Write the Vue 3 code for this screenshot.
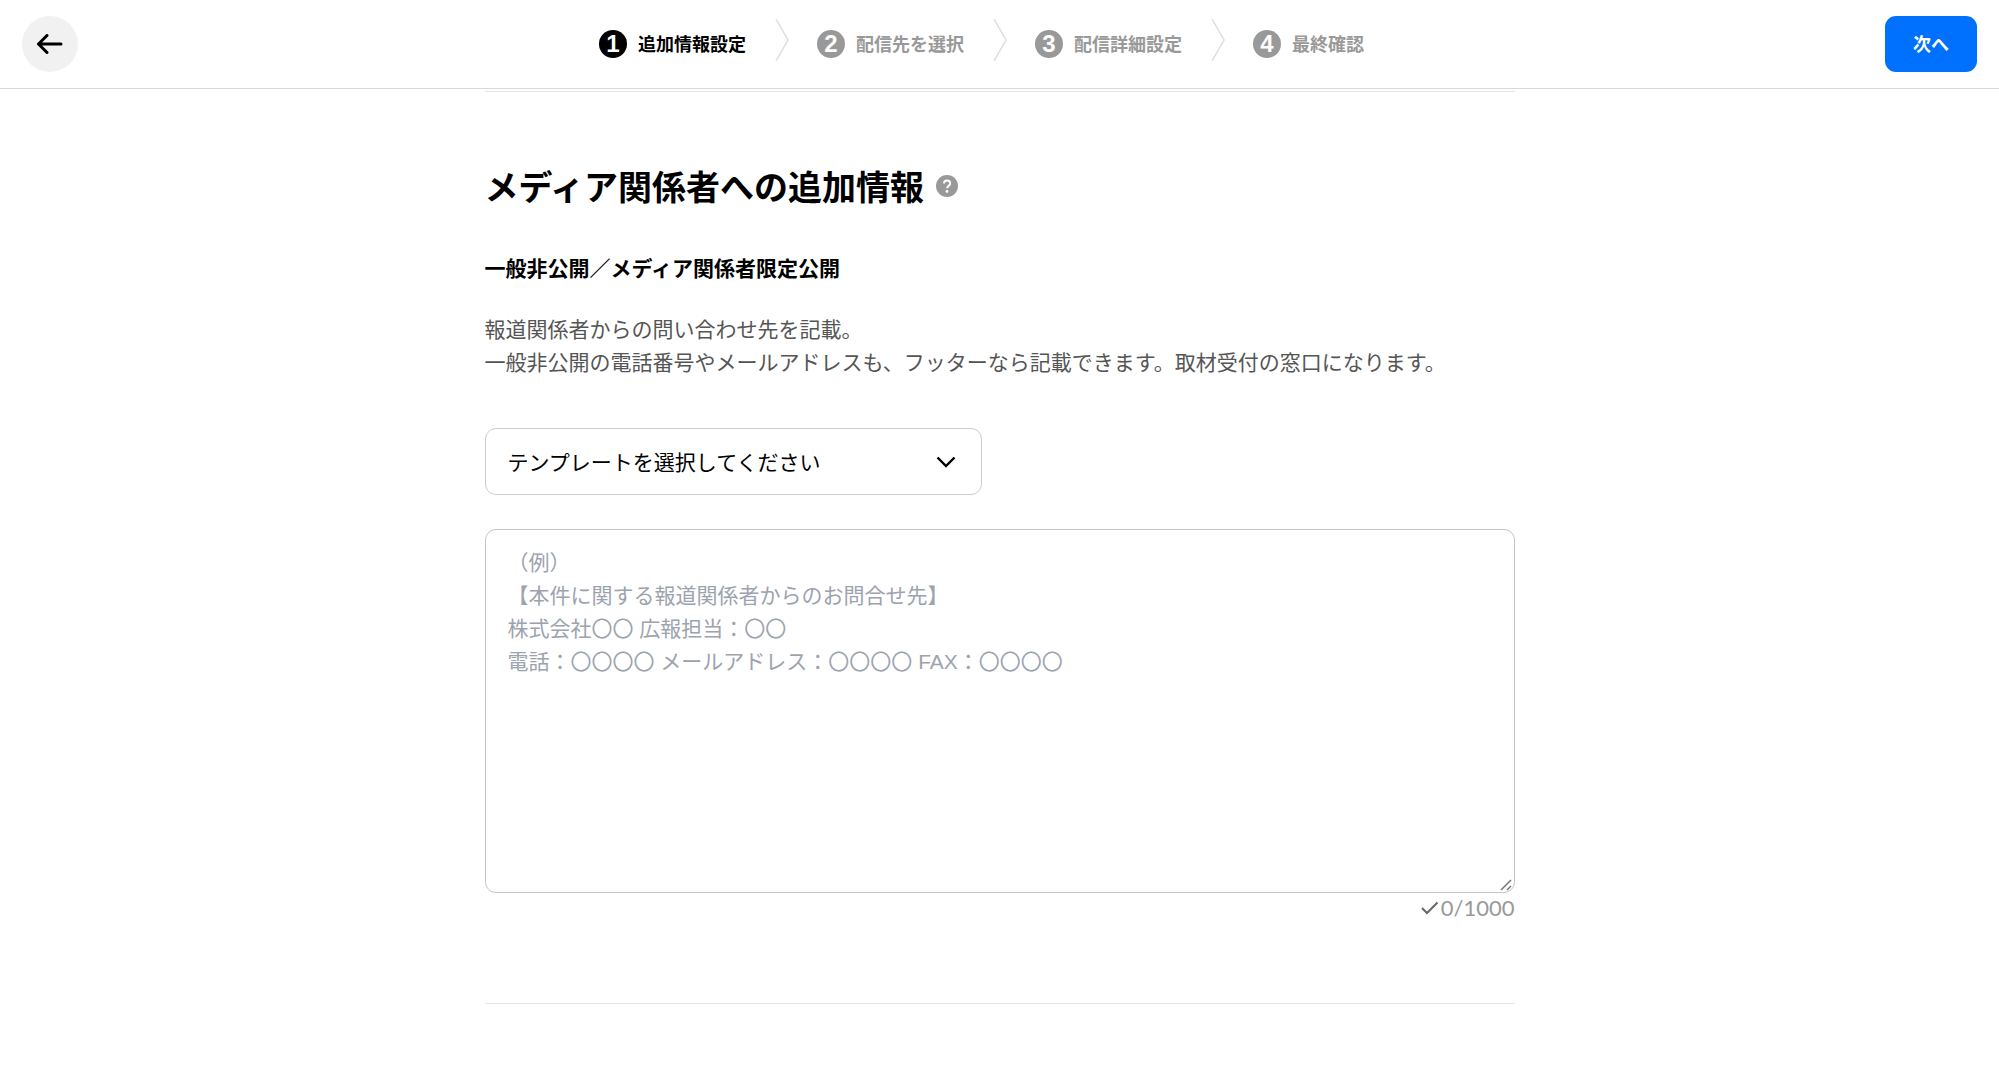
<script setup>
import { computed, ref } from 'vue'

let steps = ref([
  { id: 1, name: '追加情報設定' },
  { id: 2, name: '配信先を選択' },
  { id: 3, name: '配信詳細設定' },
  { id: 4, name: '最終確認' }
])
let currentStep = ref(1)
let template = ref('')
let body = ref('')
const maxLength = 1000

const placeholder = [
  '（例）',
  '【本件に関する報道関係者からのお問合せ先】',
  '株式会社〇〇 広報担当：〇〇',
  '電話：〇〇〇〇 メールアドレス：〇〇〇〇 FAX：〇〇〇〇'
].join('\n')

const count = computed(() => body.value.length)

function goNext() {
  if (currentStep.value < steps.value.length) {
    currentStep.value++
  }
}

function goBack() {
  if (currentStep.value > 1) {
    currentStep.value--
  }
}
</script>

<template>
  <div class="page">
    <header class="header">
      <button @click="goBack" type="button" class="back-btn" aria-label="戻る">
        <svg width="28" height="20" viewBox="0 0 28 20" aria-hidden="true">
          <path d="M11 1.500 2.500 10l8.500 8.500M2.500 10H25" />
        </svg>
      </button>
      <ol class="steps">
        <li
          v-for="(step, index) in steps"
          :key="step.id"
          :class="['step', step.id === currentStep ? 'active' : '']"
        >
          <span class="number">{{ step.id }}</span>
          <span class="name">{{ step.name }}</span>
          <svg
            v-if="index < steps.length - 1"
            class="separator"
            width="14"
            height="44"
            viewBox="0 0 14 44"
            aria-hidden="true"
          >
            <path d="M1 1l12 21L1 43" />
          </svg>
        </li>
      </ol>
      <button @click="goNext" type="button" class="next-btn">次へ</button>
    </header>

    <main class="container">
      <section class="section">
        <div class="title">
          <h1>メディア関係者への追加情報</h1>
          <button type="button" class="help" aria-label="ヘルプ">
            <svg width="22" height="22" viewBox="0 0 22 22" aria-hidden="true">
              <circle cx="11" cy="11" r="11" fill="#999" />
              <path
                d="M8 8.500C8 6.700 9.300 5.400 11 5.400s3.200 1.200 3.200 2.900c0 1.200-.7 1.900-1.600 2.600-.9.700-1.400 1.200-1.400 2.400"
                fill="none"
                stroke="#fff"
                stroke-width="2"
              />
              <circle cx="11" cy="16.400" r="1.400" fill="#fff" />
            </svg>
          </button>
        </div>
        <h2>一般非公開／メディア関係者限定公開</h2>
        <p class="description">
          報道関係者からの問い合わせ先を記載。<br />
          一般非公開の電話番号やメールアドレスも、フッターなら記載できます。取材受付の窓口になります。
        </p>

        <div class="select">
          <select v-model="template" aria-label="テンプレート">
            <option value="">テンプレートを選択してください</option>
          </select>
          <svg width="20" height="12" viewBox="0 0 20 12" aria-hidden="true">
            <path d="M1.500 1.500 10 10l8.500-8.500" />
          </svg>
        </div>

        <textarea
          v-model="body"
          :placeholder="placeholder"
          :maxlength="maxLength"
          aria-label="メディア関係者への追加情報"
        ></textarea>
        <div class="counter">
          <svg width="18" height="14" viewBox="0 0 18 14" aria-hidden="true">
            <path d="M1 7l5 5L16.500 1.500" />
          </svg>
          <span>{{ count }}/{{ maxLength }}</span>
        </div>
      </section>
    </main>
  </div>
</template>

<style>
body {
  background-color: #fff;
}
</style>

<style scoped>
.page {
  font-family: 'Noto Sans CJK JP', sans-serif;
  font-size: 21px;
  line-height: 33px;
  color: #000;
}

button,
select,
textarea {
  font-family: inherit;
}

button {
  padding: 0;
  border: none;
  cursor: pointer;
}

svg {
  display: block;
  flex-shrink: 0;
}

.header {
  position: sticky;
  top: 0;
  z-index: 1;
  display: flex;
  justify-content: space-between;
  align-items: center;
  padding: 16px 22px;
  background-color: #fff;
  border-bottom: 1px solid #d9d9d9;
}

.back-btn {
  display: flex;
  align-items: center;
  justify-content: center;
  width: 56px;
  height: 56px;
  border-radius: 50%;
  background-color: #f1f1f1;
}

.back-btn path {
  fill: none;
  stroke: #000;
  stroke-width: 3;
  stroke-linecap: round;
  stroke-linejoin: round;
}

.steps {
  display: flex;
  gap: 28px;
  margin: 0;
  padding: 0;
  list-style: none;
}

.step {
  display: flex;
  align-items: center;
  color: #999;
  font-size: 18px;
  font-weight: bold;
}

.step.active {
  color: #000;
}

.number {
  width: 28px;
  height: 28px;
  margin-right: 11px;
  border-radius: 50%;
  background-color: #999;
  color: #fff;
  font-family: 'Liberation Sans', sans-serif;
  font-size: 24px;
  line-height: 28px;
  text-align: center;
}

.active .number {
  background-color: #000;
}

.name {
  padding-bottom: 2px;
}

.separator {
  margin-left: 29px;
  margin-bottom: 8px;
}

.separator path {
  fill: none;
  stroke: #ddd;
  stroke-width: 1.5;
}

.next-btn {
  width: 92px;
  height: 56px;
  padding-bottom: 2px;
  border-radius: 11px;
  background-color: #0070ff;
  color: #fff;
  font-size: 18px;
  font-weight: bold;
}

.container {
  max-width: 1030px;
  margin: 2px auto 78px;
}

.section {
  padding: 69px 0 80px;
  border-top: 1px solid #e5e5e5;
  border-bottom: 1px solid #e5e5e5;
}

.title {
  display: flex;
  align-items: center;
  gap: 12px;
  margin-bottom: 40px;
}

h1 {
  margin: 0;
  font-size: 34px;
  line-height: 50px;
}

.help {
  background: none;
}

h2 {
  margin: 0 0 28px;
  font-size: 21px;
}

.description {
  margin: 0 0 50px;
  color: #555;
}

.select {
  position: relative;
  max-width: 497px;
  margin-bottom: 34px;
}

.select select {
  display: block;
  width: 100%;
  height: 67px;
  padding: 0 64px 2px 22px;
  border: 1px solid #ccc;
  border-radius: 11px;
  background-color: #fff;
  color: #000;
  font-size: 21px;
  appearance: none;
}

.select svg {
  position: absolute;
  top: 28px;
  right: 26px;
  pointer-events: none;
}

.select path {
  fill: none;
  stroke: #000;
  stroke-width: 2.4;
}

textarea {
  display: block;
  box-sizing: border-box;
  width: 100%;
  height: 364px;
  padding: 16px 22px;
  border: 1px solid #c4c4c4;
  border-radius: 11px;
  color: #000;
  font-family: 'Liberation Sans', 'Noto Sans CJK JP', sans-serif;
  font-size: 21px;
  line-height: 33px;
  resize: vertical;
}

textarea::placeholder {
  color: #9ca3af;
}

textarea::-webkit-resizer {
  background: url("data:image/svg+xml,%3Csvg xmlns='http://www.w3.org/2000/svg' width='15' height='15'%3E%3Cpath d='M2 13L12 3M8 13l4-4' stroke='%23777' stroke-width='1.5'/%3E%3C/svg%3E") no-repeat;
}

.counter {
  display: flex;
  justify-content: flex-end;
  align-items: center;
  gap: 2px;
  color: #999;
  font-family: Lato, sans-serif;
  font-size: 22px;
  line-height: 30px;
}

.counter path {
  fill: none;
  stroke: #666;
  stroke-width: 2;
}
</style>
